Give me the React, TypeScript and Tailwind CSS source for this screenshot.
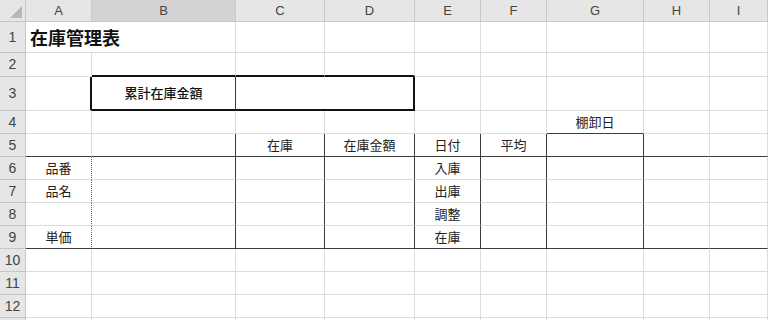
const COLS = ["A", "B", "C", "D", "E", "F", "G", "H", "I"];
const ROW_COUNT = 13;

type Side = "grid" | "line" | "thick" | "dot" | "none";

const rightCls: Record<Side, string> = {
  grid: "border-r border-r-[#dcdcdc]",
  line: "border-r border-r-[#3c3c3c]",
  thick: "border-r-2 border-r-[#111]",
  dot: "border-r border-r-[#666] [border-right-style:dotted]",
  none: "",
};

const bottomCls: Record<Side, string> = {
  grid: "border-b border-b-[#dcdcdc]",
  line: "border-b border-b-[#3c3c3c]",
  thick: "border-b-2 border-b-[#111]",
  dot: "border-b border-b-[#666] [border-bottom-style:dotted]",
  none: "",
};

type Cell = {
  text?: string;
  span?: number;
  align?: "left" | "center";
  title?: boolean;
  strong?: boolean;
  r?: Side;
  b?: Side;
};

// rows 1..13, columns A..I
function buildRow(row: number): Cell[] {
  const eLabels: Record<number, string> = { 6: "入庫", 7: "出庫", 8: "調整", 9: "在庫" };
  const aLabels: Record<number, string> = { 6: "品番", 7: "品名", 9: "単価" };

  if (row === 1) {
    return [
      { text: "在庫管理表", span: 2, align: "left", title: true },
      {}, {}, {}, {}, {}, {}, {},
    ];
  }
  if (row === 2) {
    return [{}, { b: "thick" }, { b: "thick" }, { b: "thick" }, {}, {}, {}, {}, {}];
  }
  if (row === 3) {
    return [
      { r: "thick" },
      { text: "累計在庫金額", strong: true, r: "line", b: "thick" },
      { span: 2, r: "thick", b: "thick" },
      {}, {}, {}, {}, {},
    ];
  }
  if (row === 4) {
    return [{}, {}, {}, {}, {}, {}, { text: "棚卸日", b: "line" }, {}, {}];
  }
  if (row === 5) {
    return [
      { b: "line" },
      { r: "line", b: "line" },
      { text: "在庫", r: "line", b: "line" },
      { text: "在庫金額", r: "line", b: "line" },
      { text: "日付", r: "line", b: "line" },
      { text: "平均", r: "line", b: "line" },
      { r: "line", b: "line" },
      { b: "line" },
      { b: "line" },
    ];
  }
  if (row >= 6 && row <= 9) {
    const b: Side = row === 9 ? "line" : "grid";
    return [
      { text: aLabels[row], r: "dot", b },
      { r: "line", b },
      { r: "line", b },
      { r: "line", b },
      { text: eLabels[row], r: "line", b },
      { r: "line", b },
      { r: "line", b },
      { b },
      { b },
    ];
  }
  return COLS.map(() => ({}));
}

function CornerMark() {
  return (
    <svg width="26" height="22" viewBox="0 0 26 22" className="block">
      <polygon points="22,6 22,18 10,18" fill="#b8b8b8" />
    </svg>
  );
}

export default function App() {
  const rows = Array.from({ length: ROW_COUNT }, (_, i) => i + 1);
  return (
    <div className="h-[320px] w-[768px] overflow-hidden bg-white font-['Noto_Sans_CJK_JP','Noto_Sans',sans-serif] text-[#222]">
      <div className="grid grid-cols-[26px_66px_144px_89px_90px_66px_66px_97px_66px_58px] grid-rows-[22px_31px_24px_34px_23px_23px_23px_23px_23px_23px_23px_23px_23px_23px]">
        <div className="border-r border-b border-[#c6c6c6] bg-[#e6e6e6]">
          <CornerMark />
        </div>
        {COLS.map((c) => (
          <div
            key={c}
            className={`flex items-center justify-center border-r border-b border-[#c9c9c9] font-['Liberation_Sans',sans-serif] text-[13px] text-[#444] ${c === "B" ? "bg-[#d3d3d3]" : "bg-[#e6e6e6]"}`}
          >
            {c}
          </div>
        ))}

        {rows.map((row) => (
          <RowCells key={row} row={row} />
        ))}
      </div>
    </div>
  );
}

function RowCells({ row }: { row: number }) {
  const cells = buildRow(row);
  return (
    <>
      <div className="flex items-center justify-center border-r border-b border-[#c6c6c6] bg-[#e6e6e6] font-['Liberation_Sans',sans-serif] text-[14px] text-[#444]">
        {row < ROW_COUNT ? row : ""}
      </div>
      {cells.map((cell, i) => (
        <div
          key={i}
          className={`flex items-center whitespace-nowrap ${cell.span === 2 ? "col-span-2" : ""} ${cell.align === "left" ? "justify-start pl-1" : "justify-center"} ${rightCls[cell.r ?? "grid"]} ${bottomCls[cell.b ?? "grid"]} ${cell.title ? "text-[18px] font-bold text-[#111]" : cell.strong ? "text-[13px] font-medium text-[#111]" : "text-[13px]"}`}
        >
          {cell.text}
        </div>
      ))}
    </>
  );
}
